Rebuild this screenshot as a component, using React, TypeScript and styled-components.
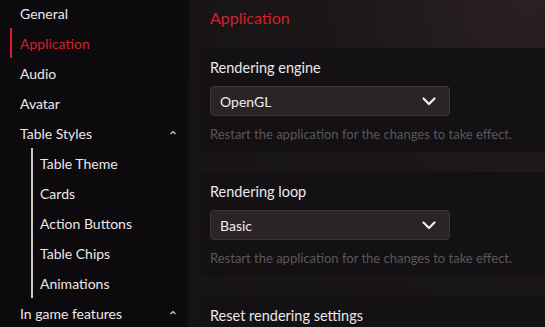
import React from 'react';
import styled, { createGlobalStyle } from 'styled-components';

const GlobalStyle = createGlobalStyle`
  html, body {
    margin: 0;
    padding: 0;
    background: #0d0a0d;
  }
  * {
    box-sizing: border-box;
  }
`;

const Shell = styled.div`
  display: flex;
  width: 545px;
  height: 327px;
  overflow: hidden;
  font-family: Lato, 'Open Sans', sans-serif;
  color: #ece8e9;
`;

const Sidebar = styled.nav`
  width: 190px;
  flex-shrink: 0;
  padding-left: 10px;
  background: #0d0a0d;
  border-right: 2px solid #151113;
  margin-top: -2px;
`;

const NavItem = styled.div<{ active?: boolean }>`
  display: flex;
  align-items: center;
  justify-content: space-between;
  height: 30px;
  padding: 0 10px 0 8px;
  border-left: 2px solid ${(p) => (p.active ? '#d4202b' : 'transparent')};
  color: ${(p) => (p.active ? '#d4202b' : '#ece8e9')};
  font-size: 14px;
`;

const SubList = styled.div`
  margin: 0 0 0 21px;
  border-left: 2px solid #c9c5c6;
`;

const SubItem = styled.div`
  height: 30px;
  display: flex;
  align-items: center;
  padding-left: 7px;
  font-size: 14px;
`;

const Caret = styled.span`
  display: inline-flex;
  width: 10px;
  height: 10px;
`;

const Main = styled.main`
  flex: 1;
  padding-left: 10px;
  overflow: hidden;
  background: radial-gradient(ellipse at 95% 0%, #2a2022 0%, #1a1618 45%, #161314 100%);
`;

const Heading = styled.h1`
  margin: 0;
  height: 48px;
  padding: 8px 0 0 10px;
  font-size: 16px;
  font-weight: 400;
  color: #d4202b;
`;

const Panel = styled.section`
  background: #131113;
  border-radius: 6px 0 0 6px;
  padding: 12px 10px 10px;
  margin-bottom: 20px;
`;

const Label = styled.div`
  font-size: 14.5px;
  line-height: 16px;
  margin-bottom: 10px;
`;

const Select = styled.div`
  display: flex;
  align-items: center;
  justify-content: space-between;
  width: 240px;
  height: 30px;
  padding: 0 12px 0 9px;
  background: #2a2426;
  border: 1px solid #3b3436;
  border-radius: 4px;
  font-size: 14px;
  color: #f2eeef;
`;

const Help = styled.div`
  margin-top: 10px;
  font-size: 13px;
  line-height: 16px;
  color: #5c5658;
`;

const UpCaret = () => (
  <Caret>
    <svg width="10" height="10" viewBox="0 0 10 10">
      <path d="M2.5 6 L5 3.5 L7.5 6" stroke="#d8d4d5" strokeWidth="1.2" fill="none" />
    </svg>
  </Caret>
);

const DownChevron = () => (
  <svg width="16" height="16" viewBox="0 0 16 16">
    <path d="M2.5 5.5 L8 11 L13.5 5.5" stroke="#f2eeef" strokeWidth="2.2" fill="none" strokeLinecap="round" strokeLinejoin="round" />
  </svg>
);

const SelectSetting = ({ label, value }: { label: string; value: string }) => (
  <Panel>
    <Label>{label}</Label>
    <Select>
      <span>{value}</span>
      <DownChevron />
    </Select>
    <Help>Restart the application for the changes to take effect.</Help>
  </Panel>
);

const App = () => {
  return (
    <>
      <GlobalStyle />
      <Shell>
        <Sidebar>
          <NavItem>General</NavItem>
          <NavItem active>Application</NavItem>
          <NavItem>Audio</NavItem>
          <NavItem>Avatar</NavItem>
          <NavItem>
            Table Styles
            <UpCaret />
          </NavItem>
          <SubList>
            <SubItem>Table Theme</SubItem>
            <SubItem>Cards</SubItem>
            <SubItem>Action Buttons</SubItem>
            <SubItem>Table Chips</SubItem>
            <SubItem>Animations</SubItem>
          </SubList>
          <NavItem>
            In game features
            <UpCaret />
          </NavItem>
        </Sidebar>
        <Main>
          <Heading>Application</Heading>
          <SelectSetting label="Rendering engine" value="OpenGL" />
          <SelectSetting label="Rendering loop" value="Basic" />
          <Panel>
            <Label>Reset rendering settings</Label>
          </Panel>
        </Main>
      </Shell>
    </>
  );
};

export default App;
